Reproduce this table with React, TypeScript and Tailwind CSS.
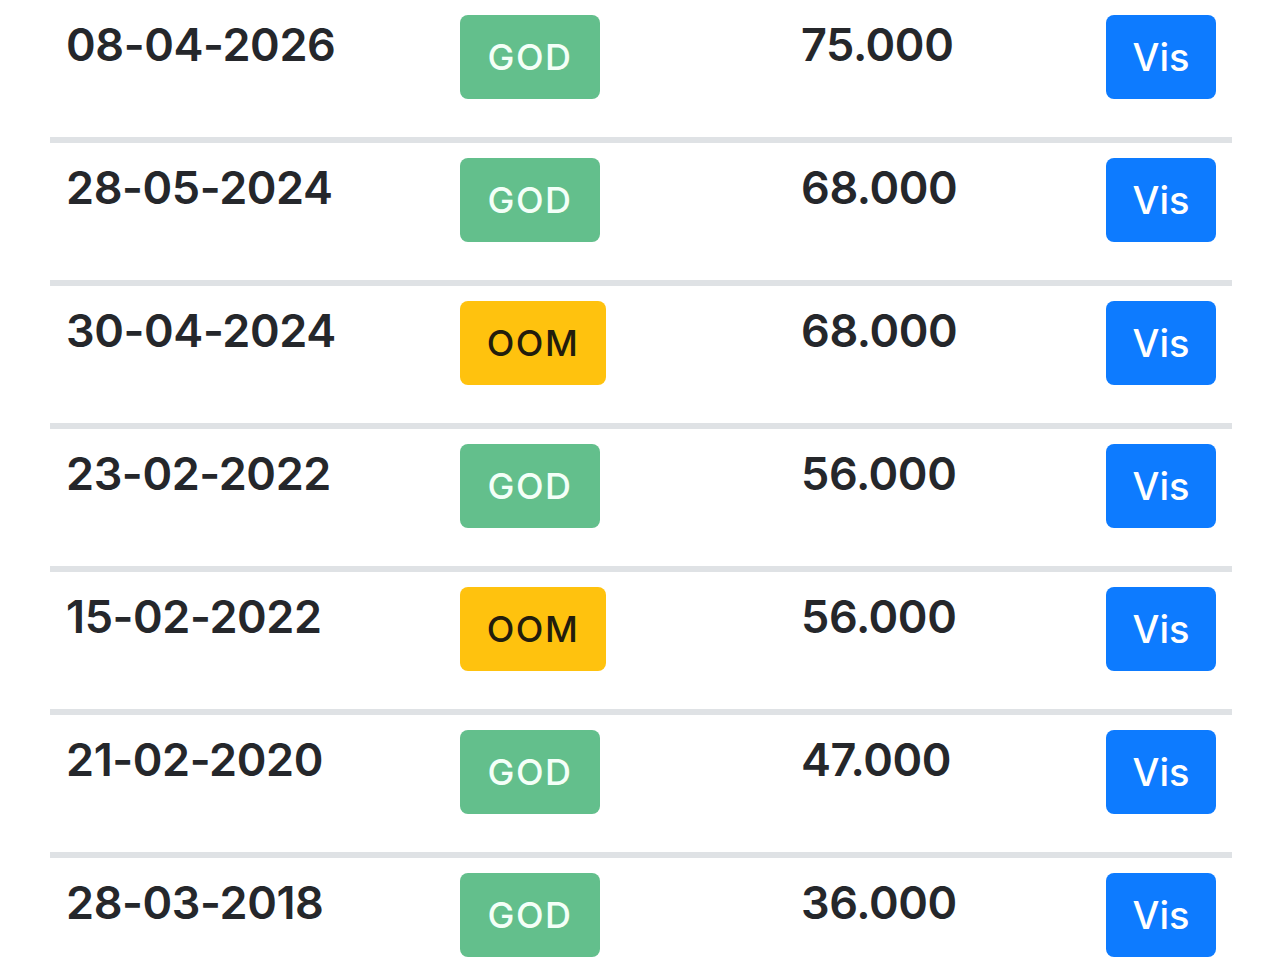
import React from 'react';

type Row = {
  date: string;
  status: 'GOD' | 'OOM';
  amount: string;
};

const rows: Row[] = [
  { date: '08-04-2026', status: 'GOD', amount: '75.000' },
  { date: '28-05-2024', status: 'GOD', amount: '68.000' },
  { date: '30-04-2024', status: 'OOM', amount: '68.000' },
  { date: '23-02-2022', status: 'GOD', amount: '56.000' },
  { date: '15-02-2022', status: 'OOM', amount: '56.000' },
  { date: '21-02-2020', status: 'GOD', amount: '47.000' },
  { date: '28-03-2018', status: 'GOD', amount: '36.000' },
];

const StatusBadge: React.FC<{ status: Row['status'] }> = ({ status }) =>
  status === 'GOD' ? (
    <span className="flex h-[84px] w-[140px] items-center justify-center rounded-lg bg-[#63bf8c] text-[36px] font-medium tracking-[1.5px] text-[#f4fff8]">
      GOD
    </span>
  ) : (
    <span className="flex h-[84px] w-[146px] items-center justify-center rounded-lg bg-[#ffc20e] text-[36px] font-medium tracking-[1.5px] text-[#231c0c]">
      OOM
    </span>
  );

export default function App() {
  return (
    <div
      className="h-[960px] w-[1280px] overflow-hidden bg-white"
      style={{ fontFamily: 'Inter, "Liberation Sans", sans-serif' }}
    >
      <div className="ml-[50px] w-[1182px]">
        {rows.map((row, i) => (
          <div
            key={row.date}
            className={
              i === 0
                ? 'flex h-[137px] items-start pt-[15px]'
                : 'flex h-[143px] items-start border-t-[6px] border-[#dfe2e5] pt-[15px]'
            }
          >
            <div className="w-[410px] pl-[16px] text-[45px] leading-[60px] font-semibold tracking-[-0.4px] text-[#25272b]">
              {row.date}
            </div>
            <div className="w-[341px]">
              <StatusBadge status={row.status} />
            </div>
            <div className="flex-1 text-[45px] leading-[60px] font-semibold tracking-[-0.4px] text-[#25272b]">
              {row.amount}
            </div>
            <button className="mr-[16px] flex h-[84px] w-[110px] items-center justify-center rounded-lg bg-[#0d7bff] text-[38px] font-medium text-white">
              Vis
            </button>
          </div>
        ))}
      </div>
    </div>
  );
}
